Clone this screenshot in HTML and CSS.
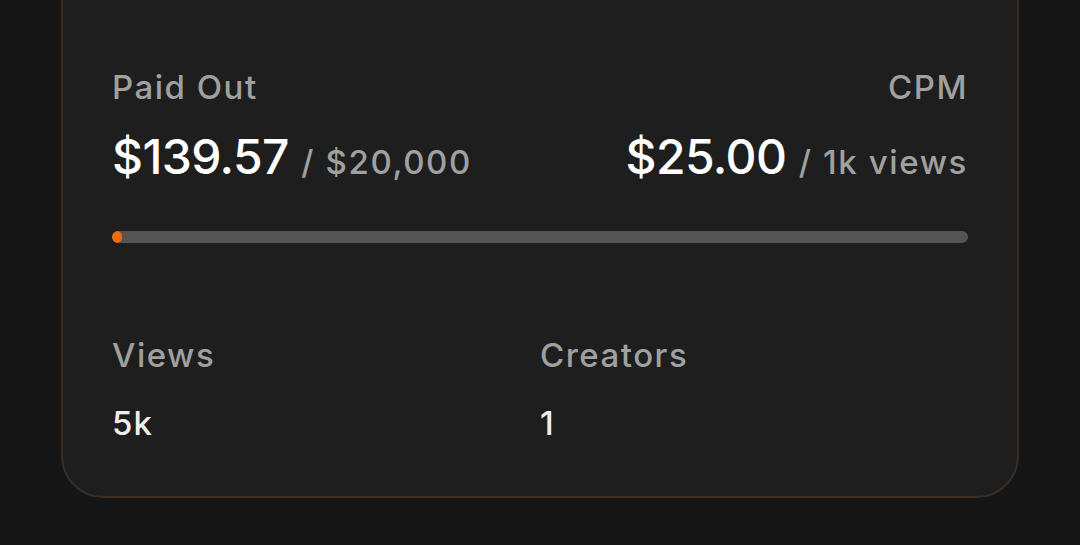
FILE: index.html
```html
<!DOCTYPE html>
<html>
<head>
<meta charset="utf-8">
<link rel="stylesheet" href="styles.css">
</head>
<body>
<div class="card">
  <div class="top">
    <div class="col">
      <div class="label">Paid Out</div>
      <div class="value"><span class="big">$139.57</span> <span class="sub">/ $20,000</span></div>
    </div>
    <div class="col right">
      <div class="label">CPM</div>
      <div class="value"><span class="big">$25.00</span> <span class="sub">/ 1k views</span></div>
    </div>
  </div>
  <div class="bar"><div class="fill" style="width: 1%"></div></div>
  <div class="stats">
    <div class="stat">
      <div class="label">Views</div>
      <div class="num">5k</div>
    </div>
    <div class="stat">
      <div class="label">Creators</div>
      <div class="num">1</div>
    </div>
  </div>
</div>
</body>
</html>
```
FILE: styles.css
```css
html, body {
  margin: 0;
  padding: 0;
  background: #151515;
  font-family: Inter, "Noto Sans", sans-serif;
  height: 545px;
  overflow: hidden;
}
.card {
  box-sizing: border-box;
  margin: -60px 0 0 61px;
  width: 958px;
  background: #1e1e1e;
  border: 2px solid #3a2e24;
  border-radius: 42px;
  padding: 125px 49px 53px;
}
.top {
  display: flex;
  justify-content: space-between;
}
.col.right {
  text-align: right;
}
.label {
  color: #a0a0a0;
  font-size: 33px;
  line-height: 40px;
  font-weight: 500;
  letter-spacing: 1.5px;
}
.value {
  margin-top: 26px;
  line-height: 48px;
  white-space: nowrap;
}
.big {
  color: #ffffff;
  font-size: 48px;
  font-weight: 500;
  letter-spacing: -0.6px;
}
.sub {
  color: #a0a0a0;
  font-size: 33px;
  font-weight: 500;
  letter-spacing: 1.6px;
  margin-left: 8px;
}
.bar {
  margin-top: 39px;
  height: 12px;
  border-radius: 6px;
  background: #555555;
  overflow: hidden;
}
.fill {
  height: 100%;
  min-width: 10px;
  background: #f26a10;
  border-radius: 6px;
}
.stats {
  display: grid;
  grid-template-columns: 1fr 1fr;
  margin-top: 92px;
}
.num {
  color: #eeeeee;
  font-size: 33px;
  font-weight: 500;
  line-height: 40px;
  margin-top: 28px;
  letter-spacing: 1px;
}
```
